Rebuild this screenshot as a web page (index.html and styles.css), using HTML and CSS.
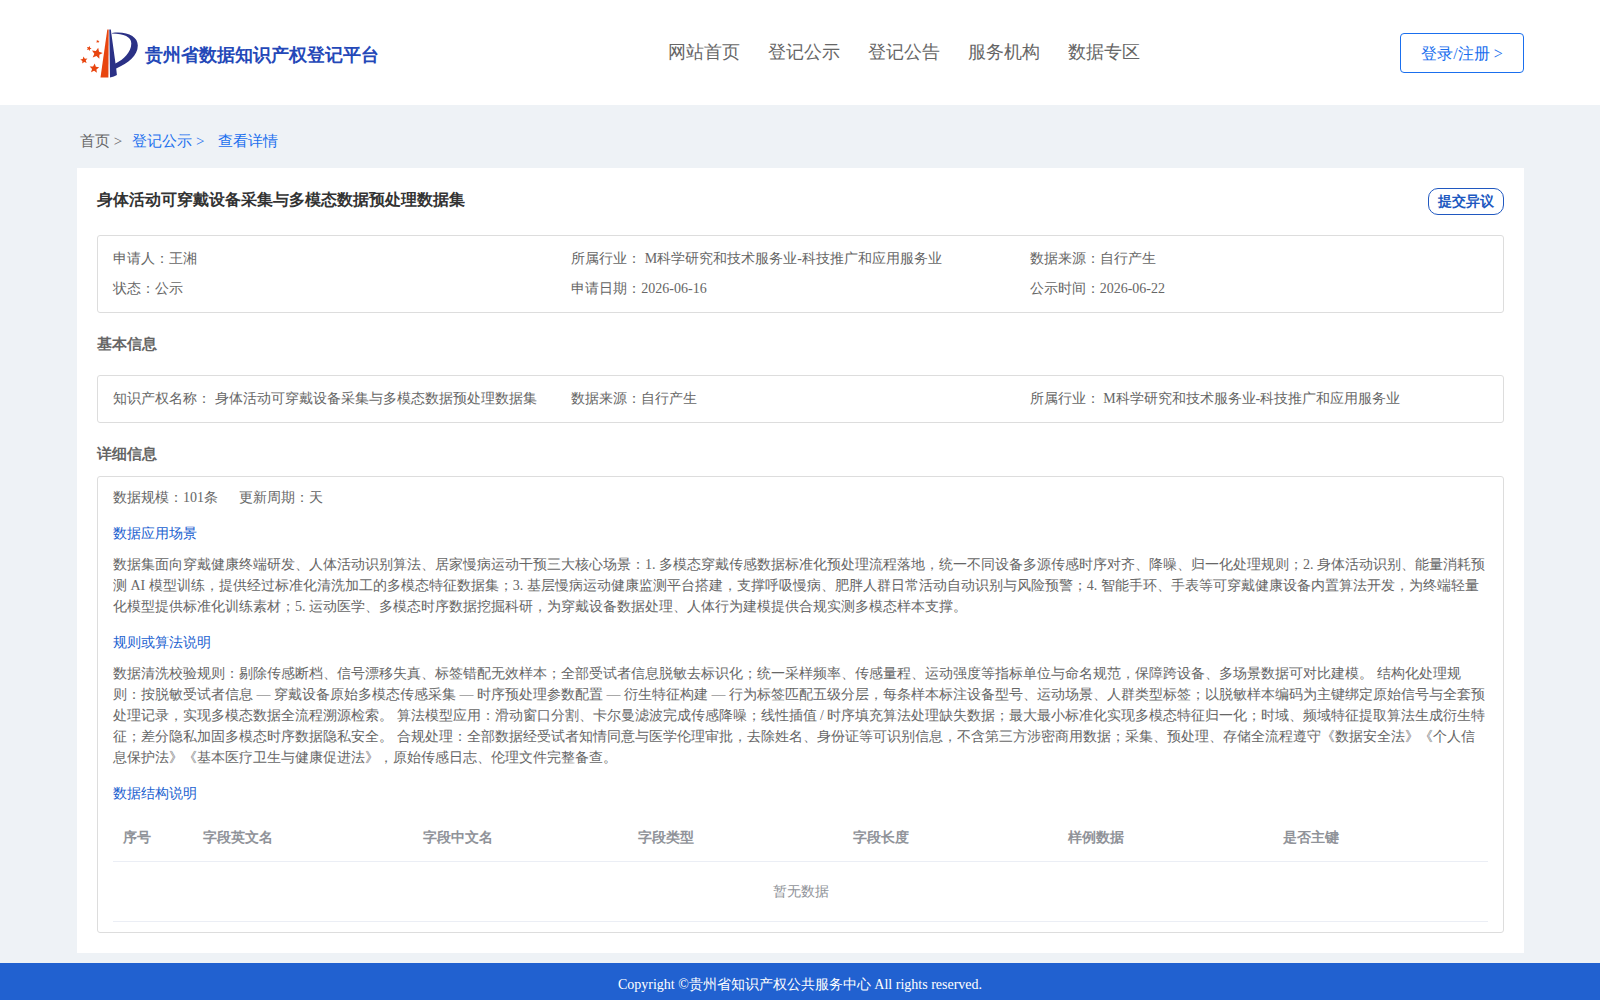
FILE: index.html
```html
<!DOCTYPE html>
<html>
<head>
<meta charset="utf-8">
<title>贵州省数据知识产权登记平台</title>
<link rel="stylesheet" href="styles.css">
</head>
<body>
<header class="header">
  <a class="brand" href="#">
    <svg class="brand-mark" viewBox="0 0 58 50" aria-hidden="true">
      <defs>
        <path id="star" d="M0-10L2.800-3.600 9.500-3.100 4.400 1.400 5.900 8.100 0 4.600-5.900 8.100-4.400 1.400-9.500-3.100-2.800-3.600z"/>
      </defs>
      <g fill="#e8450f">
        <path d="M27.300 1.500h1.400l-.3 48h-7.900z"/>
        <use href="#star" transform="translate(17 25.500) rotate(12) scale(.58)"/>
        <use href="#star" transform="translate(14.300 40.500) rotate(5) scale(.5)"/>
        <use href="#star" transform="translate(4 32.200) rotate(-8) scale(.38)"/>
        <use href="#star" transform="translate(9 20.500) rotate(20) scale(.26)"/>
        <use href="#star" transform="translate(17.700 13.500) rotate(10) scale(.18)"/>
      </g>
      <path fill="#2b3186" d="M29.300 1.500h1.500L35.500 35.500C43.500 31.500 51.300 24 51.300 15.500 51.300 9 44 5.600 32 5.600V5C47 3 57.800 8.500 57.800 17.500 57.800 27.500 48.500 35 36.200 40.500l.7 6.500c-2 1.200-4 2-6.900 2.500z"/>
    </svg>
    <span class="brand-name">贵州省数据知识产权登记平台</span>
  </a>
  <nav class="nav">
    <a href="#">网站首页</a>
    <a href="#">登记公示</a>
    <a href="#">登记公告</a>
    <a href="#">服务机构</a>
    <a href="#">数据专区</a>
  </nav>
  <button class="login" type="button">登录/注册 &gt;</button>
</header>

<main class="main">
  <nav class="crumbs">
    <a class="crumb-home" href="#">首页 &gt;</a>
    <a class="crumb-list" href="#">登记公示 &gt;</a>
    <a href="#">查看详情</a>
  </nav>

  <article class="card">
    <div class="card-head">
      <h1 class="title">身体活动可穿戴设备采集与多模态数据预处理数据集</h1>
      <button class="objection" type="button">提交异议</button>
    </div>

    <section class="panel grid">
      <div>申请人：王湘</div>
      <div>所属行业： M科学研究和技术服务业-科技推广和应用服务业</div>
      <div>数据来源：自行产生</div>
      <div>状态：公示</div>
      <div>申请日期：2026-06-16</div>
      <div>公示时间：2026-06-22</div>
    </section>

    <h2 class="section-title section-title-basic">基本信息</h2>
    <section class="panel grid">
      <div>知识产权名称： 身体活动可穿戴设备采集与多模态数据预处理数据集</div>
      <div>数据来源：自行产生</div>
      <div>所属行业： M科学研究和技术服务业-科技推广和应用服务业</div>
    </section>

    <h2 class="section-title">详细信息</h2>
    <section class="panel detail">
      <div class="facts"><span>数据规模：101条</span><span>更新周期：天</span></div>
      <h3 class="sub">数据应用场景</h3>
      <p class="text">数据集面向穿戴健康终端研发、人体活动识别算法、居家慢病运动干预三大核心场景：1. 多模态穿戴传感数据标准化预处理流程落地，统一不同设备多源传感时序对齐、降噪、归一化处理规则；2. 身体活动识别、能量消耗预测 AI 模型训练，提供经过标准化清洗加工的多模态特征数据集；3. 基层慢病运动健康监测平台搭建，支撑呼吸慢病、肥胖人群日常活动自动识别与风险预警；4. 智能手环、手表等可穿戴健康设备内置算法开发，为终端轻量化模型提供标准化训练素材；5. 运动医学、多模态时序数据挖掘科研，为穿戴设备数据处理、人体行为建模提供合规实测多模态样本支撑。</p>
      <h3 class="sub">规则或算法说明</h3>
      <p class="text">数据清洗校验规则：剔除传感断档、信号漂移失真、标签错配无效样本；全部受试者信息脱敏去标识化；统一采样频率、传感量程、运动强度等指标单位与命名规范，保障跨设备、多场景数据可对比建模。 结构化处理规则：按脱敏受试者信息 — 穿戴设备原始多模态传感采集 — 时序预处理参数配置 — 衍生特征构建 — 行为标签匹配五级分层，每条样本标注设备型号、运动场景、人群类型标签；以脱敏样本编码为主键绑定原始信号与全套预处理记录，实现多模态数据全流程溯源检索。 算法模型应用：滑动窗口分割、卡尔曼滤波完成传感降噪；线性插值 / 时序填充算法处理缺失数据；最大最小标准化实现多模态特征归一化；时域、频域特征提取算法生成衍生特征；差分隐私加固多模态时序数据隐私安全。 合规处理：全部数据经受试者知情同意与医学伦理审批，去除姓名、身份证等可识别信息，不含第三方涉密商用数据；采集、预处理、存储全流程遵守《数据安全法》《个人信息保护法》《基本医疗卫生与健康促进法》，原始传感日志、伦理文件完整备查。</p>
      <h3 class="sub">数据结构说明</h3>
      <table class="table">
        <colgroup><col class="col-index"><col class="col-en"><col><col><col><col><col></colgroup>
        <thead>
          <tr><th>序号</th><th>字段英文名</th><th>字段中文名</th><th>字段类型</th><th>字段长度</th><th>样例数据</th><th>是否主键</th></tr>
        </thead>
        <tbody>
          <tr><td class="empty" colspan="7">暂无数据</td></tr>
        </tbody>
      </table>
    </section>
  </article>
</main>

<footer class="footer">Copyright ©贵州省知识产权公共服务中心 All rights reserved.</footer>
</body>
</html>
```
FILE: styles.css
```css
* {
  box-sizing: border-box;
}

body {
  display: flex;
  flex-direction: column;
  min-height: 100vh;
  margin: 0;
  background: #eef2f6;
  color: #666;
  font-family: "Liberation Serif", serif;
  font-size: 14px;
  line-height: 21px;
  text-spacing-trim: space-all;
}

h1, h2, h3, p {
  margin: 0;
}

a {
  color: inherit;
  text-decoration: none;
}

button {
  padding: 0;
  background: #fff;
  font-family: inherit;
  cursor: pointer;
}

.header {
  display: flex;
  align-items: center;
  justify-content: space-between;
  height: 105px;
  padding: 0 76px 0 80px;
  background: #fff;
}

.brand {
  display: flex;
  align-items: center;
  gap: 7px;
}

.brand-mark {
  width: 58px;
  height: 50px;
}

.brand-name {
  padding-top: 4px;
  color: #2448b8;
  font-size: 18px;
  font-weight: 700;
  line-height: 24px;
}

.nav {
  display: flex;
  gap: 28px;
  padding: 0 0 2px 28px;
  font-size: 18px;
  line-height: 24px;
}

.login {
  width: 124px;
  height: 40px;
  padding-top: 3px;
  border: 1px solid #1a6fee;
  border-radius: 4px;
  color: #1a6fee;
  font-size: 16px;
}

.main {
  flex: 1;
  padding: 0 76px 10px 77px;
}

.crumbs {
  display: flex;
  align-items: center;
  height: 63px;
  padding: 10px 3px 0;
  color: #1a6fee;
  font-size: 15px;
}

.crumb-home {
  margin-right: 10px;
  color: #666;
}

.crumb-list {
  margin-right: 14px;
}

.card {
  padding: 20px;
  background: #fff;
}

.card-head {
  display: flex;
  align-items: flex-start;
  justify-content: space-between;
  height: 47px;
}

.title {
  color: #333;
  font-size: 16px;
  line-height: 24px;
}

.objection {
  width: 76px;
  height: 27px;
  border: 1px solid #2058c0;
  border-radius: 10px;
  color: #2058c0;
  font-size: 14px;
  font-weight: 700;
}

.panel {
  padding: 8px 15px;
  border: 1px solid #ddd;
  border-radius: 3px;
}

.grid {
  display: grid;
  grid-template-columns: repeat(3, 1fr);
  line-height: 30px;
}

.section-title {
  padding: 20px 0 11px;
  font-size: 15px;
  line-height: 22px;
}

.section-title-basic {
  padding-bottom: 20px;
}

.detail {
  padding: 10px 15px;
}

.facts {
  display: flex;
  gap: 21px;
}

.sub {
  padding: 15px 0 10px;
  color: #2161d0;
  font-size: 14px;
  font-weight: 400;
}

.table {
  width: 100%;
  border-collapse: collapse;
  table-layout: fixed;
  color: #909399;
}

.col-index {
  width: 80px;
}

.col-en {
  width: 220px;
}

.table th {
  height: 47px;
  padding: 0 10px;
  border-bottom: 1px solid #ebeef5;
  text-align: left;
}

.empty {
  height: 60px;
  padding: 0;
  border-bottom: 1px solid #ebeef5;
  text-align: center;
}

.footer {
  padding: 11px 0 5px;
  background: #2161d0;
  color: #fff;
  text-align: center;
}
```
